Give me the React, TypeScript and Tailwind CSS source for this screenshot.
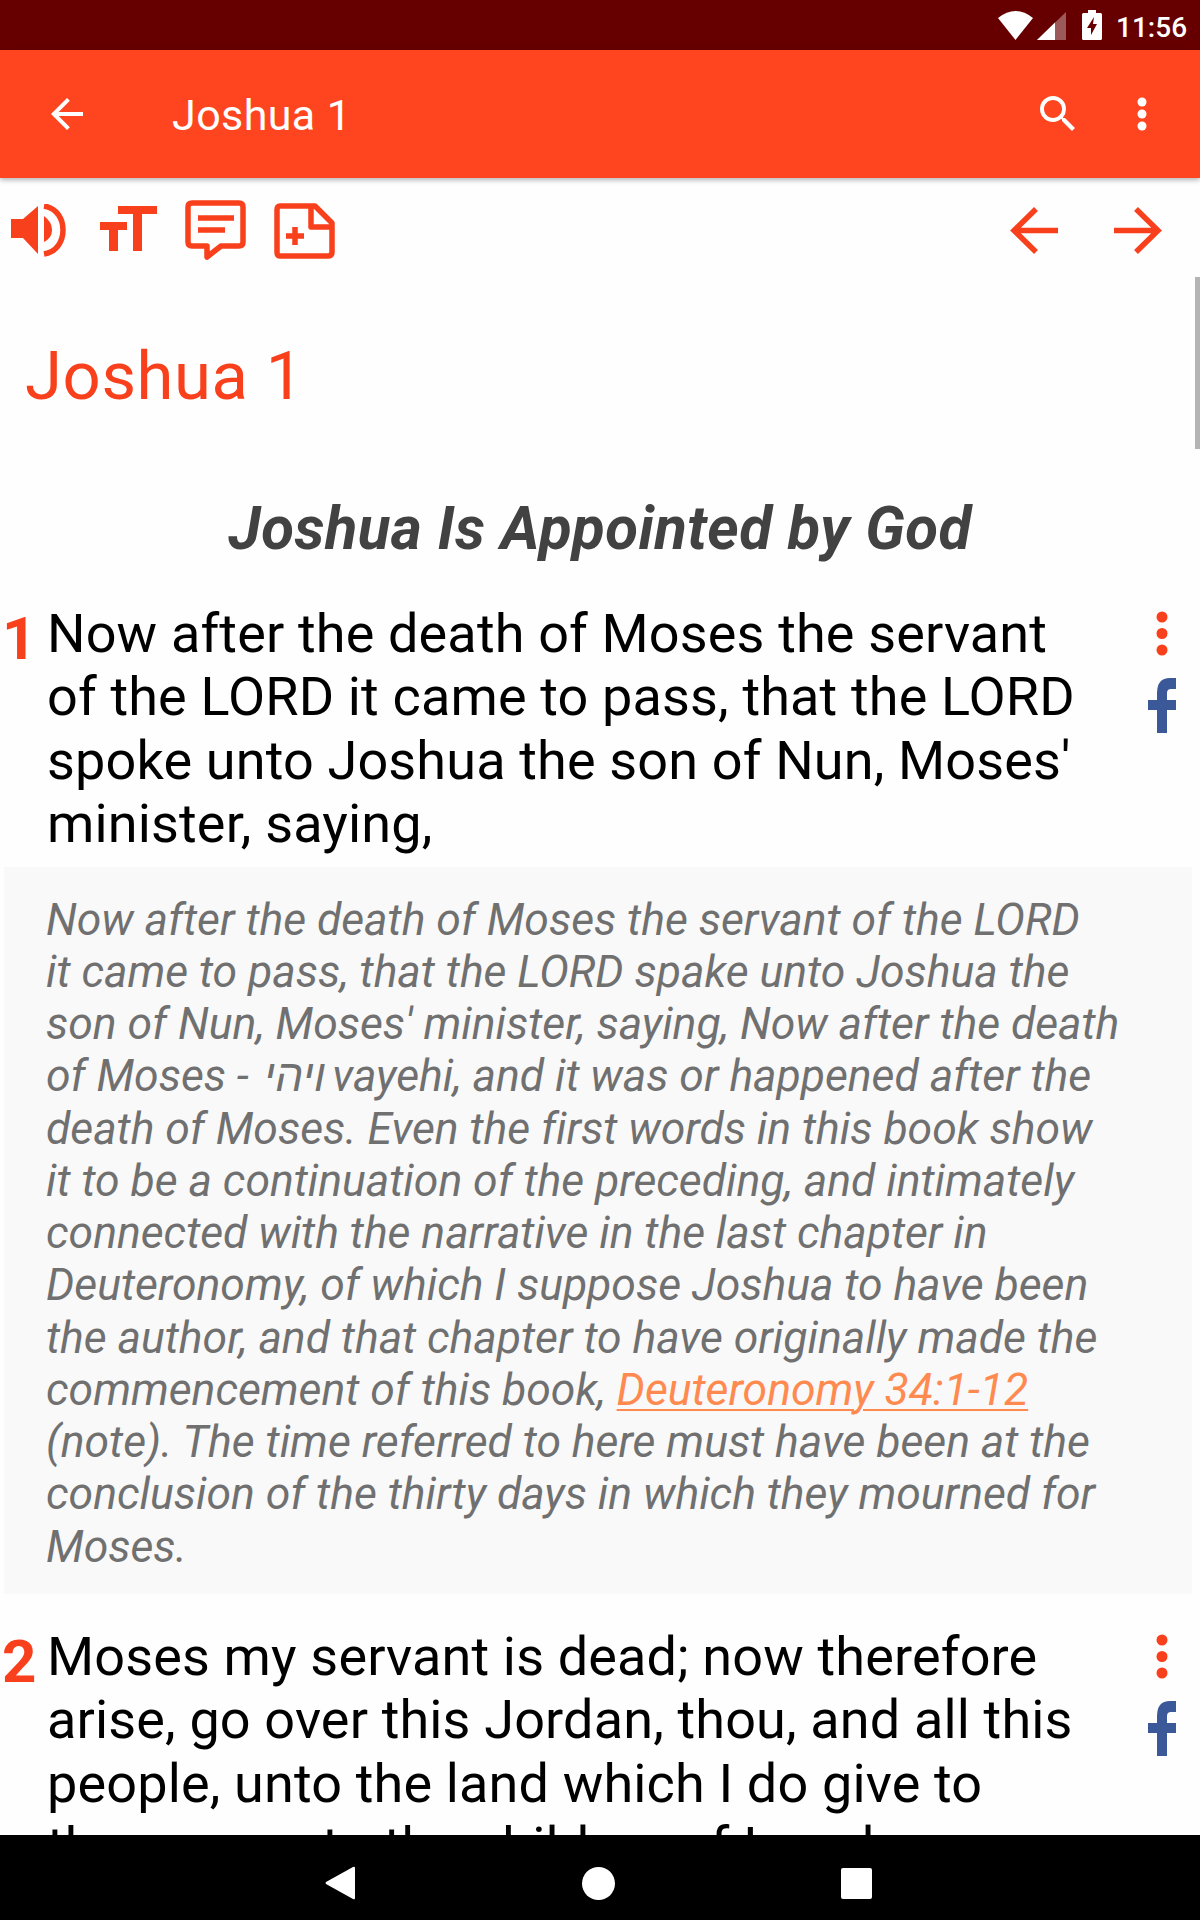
import {ReactNode} from "react";

type VerseProps = {
    num: number;
    lines: string[];
}

const verseOne = [
    "Now after the death of Moses the servant",
    "of the LORD it came to pass, that the LORD",
    "spoke unto Joshua the son of Nun, Moses'",
    "minister, saying,",
];

const verseTwo = [
    "Moses my servant is dead; now therefore",
    "arise, go over this Jordan, thou, and all this",
    "people, unto the land which I do give to",
    "them, even to the children of Israel.",
];

const noteLines: ReactNode[] = [
    "Now after the death of Moses the servant of the LORD",
    "it came to pass, that the LORD spake unto Joshua the",
    "son of Nun, Moses' minister, saying, Now after the death",
    <>of Moses - <bdi className="-mr-1 ml-1">ויהי</bdi> vayehi, and it was or happened after the</>,
    "death of Moses. Even the first words in this book show",
    "it to be a continuation of the preceding, and intimately",
    "connected with the narrative in the last chapter in",
    "Deuteronomy, of which I suppose Joshua to have been",
    "the author, and that chapter to have originally made the",
    <>commencement of this book, <a
        className="text-[#ff8a50] underline decoration-2 underline-offset-4">Deuteronomy 34:1-12</a></>,
    "(note). The time referred to here must have been at the",
    "conclusion of the thirty days in which they mourned for",
    "Moses.",
];

function StatusBar() {
    return <div className="flex h-[50px] shrink-0 items-start bg-[#660000] pl-[998px] text-white">
        <svg className="mt-[11px]" width="35" height="29" viewBox="0 0 35 29" fill="currentColor">
            <path d="M0 7Q17.500 -7 35 7L17.500 29Z"/>
        </svg>
        <svg className="mt-3 ml-1" width="29" height="28" viewBox="0 0 29 28" fill="currentColor">
            <path d="M29 0V28H0Z" opacity=".35"/>
            <path d="M18 10.600V28H0Z"/>
        </svg>
        <svg className="mt-[10px] ml-4" width="20" height="30" viewBox="0 0 20 30">
            <path d="M6 0H14V3H18.500Q20 3 20 4.500V28.500Q20 30 18.500 30H1.500Q0 30 0 28.500V4.500Q0 3 1.500 3H6Z"
                  fill="currentColor"/>
            <path d="M12 7L5 18H9V25L15 14H11Z" fill="#660000"/>
        </svg>
        <span className="mt-[11px] ml-[14px] text-[28px] leading-[33px] font-medium">11:56</span>
    </div>
}

function AppBar() {
    return <header
        className="relative z-10 flex h-32 shrink-0 items-start bg-[#ff4520] text-white shadow-[0_2px_5px_rgba(0,0,0,0.3)]">
        <svg className="mt-12 ml-[51px]" width="32" height="32" viewBox="4 4 16 16" fill="currentColor">
            <path d="M20 11H7.830l5.590-5.590L12 4l-8 8 8 8 1.410-1.410L7.830 13H20v-2z"/>
        </svg>
        <h1 className="mt-10 ml-[89px] text-[43px] leading-[51px] tracking-[0.4px]">Joshua 1</h1>
        <svg className="mt-[46px] ml-auto" width="35" height="35" viewBox="3 3 17.500 17.500" fill="currentColor">
            <path
                d="M15.500 14h-.790l-.280-.270A6.471 6.471 0 0 0 16 9.500 6.500 6.500 0 1 0 9.500 16c1.610 0 3.090-.590 4.230-1.570l.270.280v.790l5 4.990L20.490 19l-4.990-5zm-6 0C7.010 14 5 11.990 5 9.500S7.010 5 9.500 5 14 7.010 14 9.500 11.990 14 9.500 14z"/>
        </svg>
        <svg className="mt-[47px] mr-[53px] ml-[62px]" width="10" height="34" viewBox="0 0 10 34" fill="currentColor">
            <circle cx="5" cy="5" r="4.500"/>
            <circle cx="5" cy="17" r="4.500"/>
            <circle cx="5" cy="29" r="4.500"/>
        </svg>
    </header>
}

function Toolbar() {
    return <div className="flex h-[99px] shrink-0 items-start text-[#f9401c]">
        <svg className="mt-[26px] ml-[11px]" width="56" height="54" viewBox="0 0 56 54" fill="currentColor">
            <path d="M0 15H12L27 2V50L12 34H0Z"/>
            <path d="M33 12Q41 18 41 26T33 38Z"/>
            <path d="M33 2C46 4 52 15 52 26S46 48 33 50" fill="none" stroke="currentColor" strokeWidth="5.500"/>
        </svg>
        <svg className="mt-7 ml-[33px]" width="57" height="46" viewBox="0 0 57 46" fill="currentColor">
            <path d="M18 0H57V8H42V45H33V8H18Z"/>
            <path d="M0 16H27V24H18V45H9V24H0Z"/>
        </svg>
        <svg className="mt-[22px] ml-7" width="61" height="60" viewBox="0 0 61 60" fill="none" stroke="currentColor"
             strokeWidth="5.500" strokeLinejoin="round">
            <path d="M7 3H54Q58 3 58 7V42Q58 46 54 46H36L22 57V46H7Q3 46 3 42V7Q3 3 7 3Z"/>
            <path d="M13 18H49M13 30H40"/>
        </svg>
        <svg className="mt-[25px] ml-7" width="61" height="56" viewBox="0 0 61 56" fill="none" stroke="currentColor"
             strokeWidth="5.500" strokeLinejoin="round">
            <path d="M6 3H41L58 20V49Q58 53 54 53H6Q3 53 3 49V7Q3 3 6 3Z"/>
            <path d="M37 3V24H58"/>
            <path d="M12 33H30M21 24V42"/>
        </svg>
        <svg className="mt-[29px] ml-auto" width="48" height="47" viewBox="0 0 48 47" fill="none"
             stroke="currentColor" strokeWidth="5.500">
            <path d="M26 2L4 23.500L26 45M3 23.500H48"/>
        </svg>
        <svg className="mt-[29px] mr-[38px] ml-14" width="48" height="47" viewBox="0 0 48 47" fill="none"
             stroke="currentColor" strokeWidth="5.500">
            <path d="M22 2L44 23.500L22 45M45 23.500H0"/>
        </svg>
    </div>
}

function Verse({num, lines}: VerseProps) {
    return <section className="flex items-start">
        <b className="w-[47px] shrink-0 pt-[2px] pl-[2px] text-[60px] leading-[70px] text-[#f9401c]">{num}</b>
        <div className="flex-1 text-[54px] leading-[63.400px] tracking-[0.150px] whitespace-nowrap text-black">
            {lines.map((line) => <p key={line}>{line}</p>)}
        </div>
        <div className="flex w-[52px] shrink-0 flex-col items-start pt-[9px]">
            <svg className="ml-2" width="12" height="45" viewBox="0 0 12 45" fill="#f9401c">
                <circle cx="6" cy="6" r="5.500"/>
                <circle cx="6" cy="22.500" r="5.500"/>
                <circle cx="6" cy="39" r="5.500"/>
            </svg>
            <svg className="mt-[22px]" width="28" height="55" viewBox="0 0 28 55" fill="#3b5998">
                <path d="M9 55V32H0V22H9V15Q9 0 22 0H28V11H23Q19 11 19 15V22H28V32H19V55Z"/>
            </svg>
        </div>
    </section>
}

function NavBar() {
    return <nav className="flex h-[85px] shrink-0 items-start bg-black text-white">
        <svg className="mt-[31px] ml-[325px]" width="30" height="34" viewBox="0 0 30 34" fill="currentColor">
            <path d="M28 1Q30 0 30 2V32Q30 34 28 33L1 18Q0 17 1 16Z"/>
        </svg>
        <span className="mt-8 ml-[227px] size-[33px] rounded-full bg-white"></span>
        <span className="mt-[33px] ml-[226px] size-[31px] rounded-[2px] bg-white"></span>
    </nav>
}

export default function App() {
    return <div className="flex h-[1920px] w-[1200px] flex-col overflow-hidden bg-[#fefefe] font-['Roboto',sans-serif]">
        <StatusBar/>
        <AppBar/>
        <Toolbar/>
        <main className="relative min-h-0 flex-1 overflow-hidden">
            <div className="absolute top-0 right-0 h-[172px] w-[5px] bg-[#b4b4b4]"></div>
            <h2 className="pt-[59px] pl-[25px] text-[67px] leading-[80px] tracking-[0.6px] text-[#f9401c]">Joshua 1</h2>
            <h3 className="pt-[78px] text-center text-[60px] leading-[70px] font-bold tracking-[0.4px] whitespace-nowrap text-[#424242] italic">
                Joshua Is Appointed by God
            </h3>
            <div className="mt-[38px]">
                <Verse num={1} lines={verseOne}/>
            </div>
            <div
                className="mt-[11px] mr-2 ml-1 bg-[#f9f9f9] pt-[27px] pb-[21px] pl-[42px] text-[44.500px] leading-[52.250px] tracking-[-0.04px] whitespace-nowrap text-[#707070] italic">
                {noteLines.map((line, index) => <p key={index}>{line}</p>)}
            </div>
            <div className="mt-[31px]">
                <Verse num={2} lines={verseTwo}/>
            </div>
        </main>
        <NavBar/>
    </div>
}
